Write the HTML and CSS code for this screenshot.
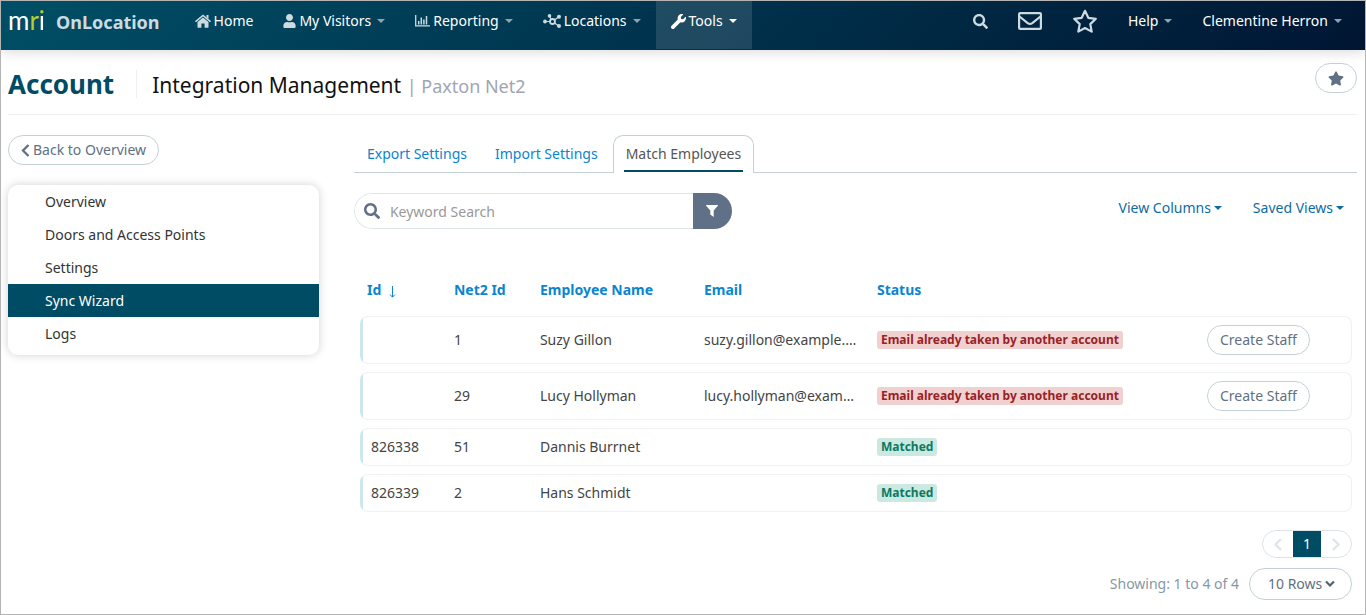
FILE: index.html
```html
<!DOCTYPE html>
<html lang="en">
<head>
    <meta charset="UTF-8">
    <meta name="viewport" content="width=device-width, initial-scale=1.0">
    <title>OnLocation - Integration Management</title>
    <link rel="stylesheet" href="styles.css">
</head>
<body>
    <nav class="navbar">
        <a class="brand" href="#">
            <span class="logo">m<span class="logo-r">r</span><span class="logo-i">i</span></span>
            <span class="brand-name">OnLocation</span>
        </a>
        <a class="nav-link" href="#">
            <svg class="icon" width="16" height="14" viewBox="0 0 16 14"><path fill="currentColor" d="M8 3.400L2.500 8v5.200c0 .3.200.5.500.5h3.400V9.600h3.200v4.100H13c.3 0 .5-.2.500-.5V8z"/><path fill="none" stroke="currentColor" stroke-width="1.500" stroke-linecap="round" d="M.9 7.300L8 1.400l7.100 5.900"/><path fill="currentColor" d="M11.500 1h2v4l-2-1.700z"/></svg>
            Home
        </a>
        <a class="nav-link" href="#">
            <svg class="icon" width="13" height="14" viewBox="0 0 448 512"><path fill="currentColor" d="M224 256c70.700 0 128-57.300 128-128S294.700 0 224 0 96 57.300 96 128s57.300 128 128 128zm89.600 32h-16.700c-22.200 10.200-46.900 16-72.900 16s-50.600-5.800-72.900-16h-16.700C60.200 288 0 348.200 0 422.400V464c0 26.500 21.500 48 48 48h352c26.500 0 48-21.500 48-48v-41.600c0-74.200-60.200-134.400-134.400-134.400z"/></svg>
            My Visitors <span class="caret"></span>
        </a>
        <a class="nav-link" href="#">
            <svg class="icon" width="15" height="12" viewBox="0 0 15 12"><path fill="none" stroke="currentColor" stroke-width="1.300" d="M.7 0v10.800H15"/><path fill="none" stroke="currentColor" stroke-width="1.500" d="M3.700 9.500V6M6.300 9.500V2.500M8.900 9.500V4.500M11.500 9.500V1"/></svg>
            Reporting <span class="caret"></span>
        </a>
        <a class="nav-link" href="#">
            <svg class="icon" width="18" height="14" viewBox="0 0 18 14"><g fill="currentColor"><circle cx="2" cy="7.500" r="1.900"/><circle cx="6.500" cy="1.900" r="1.800"/><circle cx="16" cy="2.800" r="2"/><circle cx="16" cy="12" r="2"/></g><g fill="none" stroke="currentColor"><circle cx="9.500" cy="7.500" r="2.500" stroke-width="1.800"/><path stroke-width="1.200" d="M3 7.500h4M6.700 2.500l1.500 3M11.500 6l4-3M11.500 9l4 2.700"/></g></svg>
            Locations <span class="caret"></span>
        </a>
        <a class="nav-link nav-active" href="#">
            <svg class="icon" width="15" height="15" viewBox="0 0 512 512"><path fill="currentColor" d="M507.700 109.100c-2.200-9-13.500-12.100-20.100-5.500l-74.400 74.400-67.900-11.300-11.300-67.900 74.400-74.400c6.600-6.600 3.400-17.900-5.700-20.200-47.400-11.700-99.600.9-136.600 37.900-39.600 39.600-50.500 97.100-34 147.200L18.700 402.800c-25 25-25 65.500 0 90.500s65.500 25 90.500 0l213.200-213.200c50.100 16.700 107.500 5.700 147.400-34.200 37.100-37.100 49.700-89.400 37.900-136.800z"/></svg>
            Tools <span class="caret"></span>
        </a>
        <div class="nav-right">
            <a class="nav-link" href="#" aria-label="Search">
                <svg class="icon" width="15" height="15" viewBox="0 0 512 512"><path fill="currentColor" d="M505 442.700L405.300 343c-4.500-4.500-10.600-7-17-7H372c27.600-35.300 44-79.700 44-128C416 93.100 322.900 0 208 0S0 93.100 0 208s93.100 208 208 208c48.300 0 92.700-16.400 128-44v16.300c0 6.400 2.500 12.500 7 17l99.700 99.700c9.400 9.400 24.600 9.400 33.900 0l28.300-28.300c9.400-9.400 9.400-24.600.1-34zM208 336c-70.700 0-128-57.200-128-128 0-70.700 57.200-128 128-128 70.700 0 128 57.200 128 128 0 70.700-57.200 128-128 128z"/></svg>
            </a>
            <a class="nav-link" href="#" aria-label="Messages">
                <svg class="icon" width="24" height="18" viewBox="0 0 24 18"><g fill="none" stroke="currentColor" stroke-width="2.200"><rect x="1.100" y="1.100" width="21.800" height="15.800" rx="1"/><path d="M1.500 4.500l8.200 6.600q2.300 1.700 4.600 0l8.200-6.600"/></g></svg>
            </a>
            <a class="nav-link" href="#" aria-label="Favourites">
                <svg class="icon" width="26" height="24" viewBox="0 0 26 24"><path fill="none" stroke="currentColor" stroke-width="2.200" stroke-linejoin="round" d="M13 1.800l3.300 7 7.500 1-5.500 5.300 1.400 7.500L13 19l-6.700 3.600 1.400-7.500-5.500-5.300 7.500-1z"/></svg>
            </a>
            <a class="nav-link" href="#">Help <span class="caret"></span></a>
            <a class="nav-link" href="#">Clementine Herron <span class="caret"></span></a>
        </div>
    </nav>

    <header class="page-header">
        <h1 class="section-title">Account</h1>
        <h2 class="page-title">Integration Management <span class="page-subtitle">| Paxton Net2</span></h2>
        <button class="btn btn-star" type="button" aria-label="Add to favourites">
            <svg width="16" height="15" viewBox="0 0 576 512"><path fill="currentColor" d="M259.300 17.800L194 150.200 47.900 171.500c-26.200 3.800-36.700 36.100-17.700 54.600l105.700 103-25 145.500c-4.500 26.300 23.200 46 46.400 33.700L288 439.600l130.700 68.700c23.200 12.200 50.900-7.400 46.400-33.700l-25-145.500 105.700-103c19-18.500 8.500-50.800-17.700-54.600L382 150.200 316.700 17.800c-11.700-23.600-45.600-23.900-57.400 0z"/></svg>
        </button>
    </header>

    <div class="layout">
        <aside>
            <a class="btn btn-back" href="#">
                <svg width="9" height="13" viewBox="0 0 9 13"><path fill="none" stroke="currentColor" stroke-width="2.300" d="M7.500 1L2 6.500 7.500 12"/></svg>
                Back to Overview
            </a>
            <ul class="side-menu">
                <li><a href="#">Overview</a></li>
                <li><a href="#">Doors and Access Points</a></li>
                <li><a href="#">Settings</a></li>
                <li><a class="side-active" href="#">Sync Wizard</a></li>
                <li><a href="#">Logs</a></li>
            </ul>
        </aside>

        <main>
            <div class="tabs">
                <a class="tab" href="#">Export Settings</a>
                <a class="tab" href="#">Import Settings</a>
                <a class="tab tab-active" href="#">Match Employees</a>
            </div>

            <div class="toolbar">
                <form class="search">
                    <label class="search-label" for="keyword" aria-label="Keyword Search">
                        <svg width="16" height="16" viewBox="0 0 512 512"><path fill="currentColor" d="M505 442.700L405.300 343c-4.500-4.500-10.600-7-17-7H372c27.600-35.300 44-79.700 44-128C416 93.100 322.900 0 208 0S0 93.100 0 208s93.100 208 208 208c48.300 0 92.700-16.400 128-44v16.300c0 6.400 2.500 12.500 7 17l99.700 99.700c9.400 9.400 24.600 9.400 33.900 0l28.300-28.300c9.400-9.400 9.400-24.600.1-34zM208 336c-70.700 0-128-57.200-128-128 0-70.700 57.200-128 128-128 70.700 0 128 57.200 128 128 0 70.700-57.200 128-128 128z"/></svg>
                    </label>
                    <input class="search-input" type="text" id="keyword" name="keyword" placeholder="Keyword Search">
                    <button class="search-filter" type="button" aria-label="Filter">
                        <svg width="12" height="12" viewBox="0 0 12 12"><path fill="currentColor" d="M.4 0h11.200c.4 0 .5.500.3.800L7.700 5.500V12L4.300 9.500v-4L.1.800C-.1.500 0 0 .4 0z"/></svg>
                    </button>
                </form>
                <div class="view-links">
                    <a class="view-link" href="#">View Columns<span class="caret"></span></a>
                    <a class="view-link" href="#">Saved Views<span class="caret"></span></a>
                </div>
            </div>

            <table class="employees">
                <thead>
                    <tr>
                        <th class="col-id">Id <svg class="sort" width="8" height="12" viewBox="0 0 8 12"><path fill="none" stroke="currentColor" d="M4.500 0v11M2 8.500l2.500 2.700L7 8.500"/></svg></th>
                        <th class="col-net2">Net2 Id</th>
                        <th class="col-name">Employee Name</th>
                        <th class="col-email">Email</th>
                        <th>Status</th>
                        <th class="col-action"></th>
                    </tr>
                </thead>
                <tbody>
                    <tr>
                        <td></td>
                        <td>1</td>
                        <td>Suzy Gillon</td>
                        <td>suzy.gillon@example.com</td>
                        <td><span class="badge badge-error">Email already taken by another account</span></td>
                        <td><button class="btn" type="button">Create Staff</button></td>
                    </tr>
                    <tr>
                        <td></td>
                        <td>29</td>
                        <td>Lucy Hollyman</td>
                        <td>lucy.hollyman@example.com</td>
                        <td><span class="badge badge-error">Email already taken by another account</span></td>
                        <td><button class="btn" type="button">Create Staff</button></td>
                    </tr>
                    <tr>
                        <td>826338</td>
                        <td>51</td>
                        <td>Dannis Burrnet</td>
                        <td></td>
                        <td><span class="badge badge-ok">Matched</span></td>
                        <td></td>
                    </tr>
                    <tr>
                        <td>826339</td>
                        <td>2</td>
                        <td>Hans Schmidt</td>
                        <td></td>
                        <td><span class="badge badge-ok">Matched</span></td>
                        <td></td>
                    </tr>
                </tbody>
            </table>

            <div class="table-footer">
                <div class="pagination">
                    <button class="page-btn" type="button" aria-label="Previous page" disabled>
                        <svg width="10" height="13" viewBox="0 0 10 13"><path fill="none" stroke="currentColor" stroke-width="2.400" d="M8 1L2.500 6.500 8 12"/></svg>
                    </button>
                    <button class="page-btn page-current" type="button">1</button>
                    <button class="page-btn" type="button" aria-label="Next page" disabled>
                        <svg width="10" height="13" viewBox="0 0 10 13"><path fill="none" stroke="currentColor" stroke-width="2.400" d="M2 1l5.500 5.500L2 12"/></svg>
                    </button>
                </div>
                <div class="rows">
                    <label for="rows">Showing: 1 to 4 of 4</label>
                    <div class="rows-box">
                        <select class="rows-select" id="rows" name="rows">
                            <option>10 Rows</option>
                        </select>
                        <svg class="rows-chevron" width="10" height="8" viewBox="0 0 10 8"><path fill="none" stroke="currentColor" stroke-width="2.200" d="M1 1.500l4 4 4-4"/></svg>
                    </div>
                </div>
            </div>
        </main>
    </div>
</body>
</html>
```
FILE: styles.css
```css
* {
    box-sizing: border-box;
}
body {
    font-family: "Noto Sans", sans-serif;
    font-size: 14px;
    line-height: 20px;
    margin: 0;
    min-height: 100vh;
    color: #444;
    background-color: #fff;
    border: 1px solid #b4b4b4;
}
a {
    text-decoration: none;
}
button, input, select {
    font: inherit;
}
svg {
    flex: none;
}

/* Top bar */
.navbar {
    display: flex;
    height: 49px;
    padding: 0 8px 0 7px;
    background: linear-gradient(135deg, #004f66, #001633);
    box-shadow: 0 2px 12px rgba(0, 0, 0, 0.15);
}
.brand {
    display: flex;
    gap: 11px;
    height: 42px;
    align-items: center;
    margin-right: 20px;
    color: #ccdbe0;
}
.logo {
    padding-bottom: 5px;
    font-family: Lato, sans-serif;
    font-size: 26px;
    line-height: 30px;
    color: #fff;
}
.logo-r {
    color: #b5cc2e;
}
.logo-i {
    color: transparent;
    background: linear-gradient(#b5cc2e 11px, #fff 11px);
    background-clip: text;
    -webkit-background-clip: text;
}
.brand-name {
    font-size: 18px;
    font-weight: bold;
}
.nav-link {
    display: flex;
    align-items: center;
    gap: 3px;
    height: 48px;
    padding: 0 15px 8px;
    color: #fff;
}
.nav-link .icon {
    color: #ccdbe0;
}
.nav-active {
    background-color: rgba(255, 255, 255, 0.12);
}
.nav-active .icon {
    color: #fff;
}
.nav-right {
    display: flex;
    margin-left: auto;
}
.caret {
    border: 4px solid transparent;
    border-top-color: currentColor;
    border-bottom: 0;
}
.nav-link .caret {
    margin-left: 3px;
    border-top-color: #8fa3ae;
}
.nav-active .caret {
    border-top-color: #fff;
}

/* Title row */
.page-header {
    display: flex;
    align-items: center;
    height: 65px;
    margin: 0 8px 0 7px;
    padding-top: 4px;
    border-bottom: 1px solid #eef1f1;
}
.section-title {
    margin: 0;
    padding-right: 22px;
    border-right: 1px solid #eef1f1;
    font-size: 26px;
    line-height: 28px;
    color: #004c64;
}
.page-title {
    margin: 0;
    padding: 3px 0 0 15px;
    font-size: 21px;
    font-weight: normal;
    color: #111;
}
.page-subtitle {
    font-size: 18px;
    color: #a0a5b4;
}

/* Buttons */
.btn {
    display: inline-flex;
    align-items: center;
    justify-content: center;
    height: 30px;
    padding: 0 12px;
    color: #5f7183;
    background-color: #fff;
    border: 1px solid #c3d1d6;
    border-radius: 15px;
    cursor: pointer;
}
.btn-star {
    width: 42px;
    margin: 0 0 12px auto;
}
.btn-back {
    gap: 3px;
}

/* Columns */
.layout {
    display: grid;
    grid-template-columns: 31fr 100fr;
    gap: 35px;
    margin: 20px 8px 13px 7px;
}
.side-menu {
    list-style: none;
    margin: 20px 0 0;
    padding: 0 0 5px;
    border-radius: 10px;
    box-shadow: 0 0 10px rgba(0, 0, 0, 0.18);
}
.side-menu a {
    display: block;
    padding: 7px 37px 6px;
    color: #333;
}
.side-menu .side-active {
    color: #fff;
    background-color: #004c64;
}

/* Tabs */
.tabs {
    display: flex;
    gap: 2px;
    border-bottom: 1px solid #c3d1d6;
}
.tab {
    padding: 8px 12px;
    border: 1px solid transparent;
    border-bottom: 0;
    color: #0a85cf;
}
.tab-active {
    position: relative;
    margin-bottom: -1px;
    padding-bottom: 9px;
    color: #555;
    background-color: #fff;
    border-color: #c3d1d6;
    border-radius: 10px 10px 0 0;
}
.tab-active::after {
    content: "";
    position: absolute;
    left: 10px;
    right: 10px;
    bottom: 1px;
    height: 2px;
    background-color: #004c64;
}

/* Search and view links */
.toolbar {
    display: flex;
    justify-content: space-between;
    margin-top: 20px;
}
.search {
    display: flex;
    width: 378px;
    height: 36px;
    border-radius: 18px;
    overflow: hidden;
}
.search-label {
    display: flex;
    align-items: center;
    padding: 0 0 0 9px;
    border: 1px solid #dde6e6;
    border-right: 0;
    border-radius: 18px 0 0 18px;
    color: #5f7087;
}
.search-input {
    flex: 1;
    min-width: 0;
    padding: 2px 10px 0;
    border: 1px solid #dde6e6;
    border-width: 1px 0;
    outline: 0;
}
.search-input::placeholder {
    color: #999;
}
.search-filter {
    display: flex;
    align-items: center;
    justify-content: center;
    width: 39px;
    padding: 0;
    border: 0;
    color: #fff;
    background-color: #5f7087;
}
.view-links {
    display: flex;
    gap: 31px;
    padding: 5px 13px 0 0;
}
.view-link {
    display: flex;
    align-items: center;
    gap: 3px;
    height: 20px;
    color: #0c6ca5;
}

/* Employees table */
.employees {
    width: calc(100% - 11px);
    margin: 35px 5px 0 6px;
    table-layout: fixed;
    border-collapse: separate;
    border-spacing: 0 8px;
}
.employees th {
    padding: 8px 7px;
    text-align: left;
    color: #0a85cf;
}
.employees td {
    padding: 8px 12px 8px 7px;
    border: 1px solid #eff2f2;
    border-width: 1px 0;
    white-space: nowrap;
    overflow: hidden;
    text-overflow: ellipsis;
}
.employees td:first-child {
    padding-left: 10px;
    border-left: 1px solid #cce8ec;
    border-radius: 8px 0 0 8px;
    background: linear-gradient(to right, #cce8ec 2px, transparent 2px);
}
.employees td:last-child {
    border-right-width: 1px;
    border-radius: 0 8px 8px 0;
}
.col-id {
    width: 87px;
}
.col-net2 {
    width: 86px;
}
.col-name {
    width: 164px;
}
.col-email {
    width: 173px;
}
.col-action {
    width: 152px;
}
.employees .btn {
    vertical-align: top;
}
.sort {
    margin-left: 3px;
    vertical-align: -3px;
}
.badge {
    display: inline-block;
    margin: 1px 0;
    padding: 0 4px;
    border-radius: 3px;
    font-size: 12px;
    line-height: 18px;
    font-weight: bold;
    vertical-align: top;
}
.badge-error {
    color: #982226;
    background-color: #f1d0d0;
}
.badge-ok {
    color: #0b7a63;
    background-color: #cbe9e0;
}

/* Paging */
.table-footer {
    display: flex;
    flex-direction: column;
    align-items: flex-end;
    gap: 10px;
    margin: 10px 5px 0 0;
}
.pagination {
    display: flex;
    width: 90px;
    height: 28px;
    border: 1px solid #dde3e8;
    border-radius: 14px;
}
.page-btn {
    display: flex;
    flex: 1;
    align-items: center;
    justify-content: center;
    padding: 0;
    border: 0;
    background: none;
    color: #dde6e8;
}
.page-current {
    flex: none;
    width: 28px;
    color: #fff;
    background-color: #004c64;
}
.rows {
    display: flex;
    align-items: center;
    gap: 10px;
    color: #8698a6;
}
.rows-box {
    position: relative;
}
.rows-select {
    display: block;
    appearance: none;
    width: 103px;
    height: 32px;
    padding: 0 18px;
    color: #5f7183;
    background-color: #fff;
    border: 1px solid #c3d1d6;
    border-radius: 16px;
}
.rows-chevron {
    position: absolute;
    top: 12px;
    right: 17px;
    color: #4f6375;
    pointer-events: none;
}
```
